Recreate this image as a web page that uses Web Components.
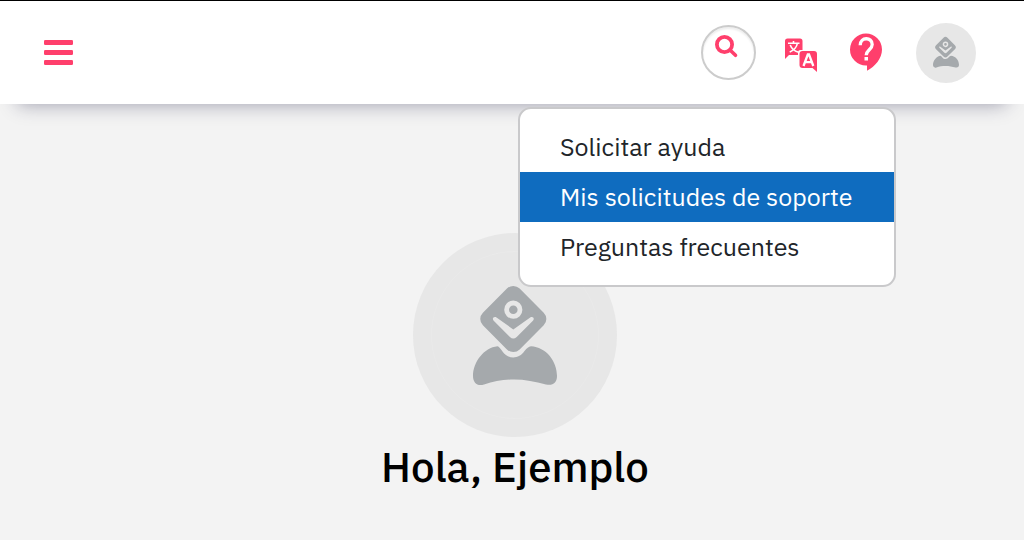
<!DOCTYPE html>
<html lang="es">
<head>
<meta charset="utf-8">
<meta name="viewport" content="width=device-width, initial-scale=1">
<title>Inicio</title>
<style>
  body {
    margin: 0;
    min-height: 100vh;
    background: #f3f3f3;
    color: #212529;
    font-family: "IBM Plex Sans", "Noto Sans", sans-serif;
  }
</style>
</head>
<body>
<app-header>
  <help-menu slot="menu">
    <menu-item>Solicitar ayuda</menu-item>
    <menu-item active>Mis solicitudes de soporte</menu-item>
    <menu-item>Preguntas frecuentes</menu-item>
  </help-menu>
</app-header>
<welcome-panel>Hola, Ejemplo</welcome-panel>

<script>
  class Base extends HTMLElement {
    constructor() {
      super();
      this.attachShadow({ mode: "open" }).innerHTML = this.constructor.markup;
    }
  }

  customElements.define("user-avatar", class extends Base {
    static markup = `
      <style>
        :host { display: flex; align-items: center; justify-content: center; border-radius: 50%;
          background: #e7e7e7; width: var(--avatar-size, 60px); height: var(--avatar-size, 60px);
          position: relative; }
        svg { width: var(--figure-size, 26px); display: block; overflow: visible; }
        .ring { display: var(--ring, none); position: absolute; inset: 18px;
          border: 1px solid #eaeaea; border-radius: 50%; }
      </style>
      <span class="ring"></span>
      <svg viewBox="0 0 84 98" aria-hidden="true">
        <g fill="#a5a9ac">
          <rect x="14.3" y="7" width="52" height="52" rx="9" transform="rotate(45 40.3 33)"/>
          <path d="M24.5 60.2C11 61.5 0 76 0 90c0 7 4.5 10.500 11 8.500C21 95 30 93.500 41 93.500S62 95.500 73 98.500c7 1.500 11-2 11-8.500C84 75 73 61 58 60.200C55.500 60.500 54 62 51.500 65C46 73.500 35 73.500 29.500 65.500C27.500 62.500 26 60.500 24.500 60.200Z"/>
        </g>
        <circle cx="40.300" cy="23.700" r="6.700" fill="none" stroke="#e7e7e7" stroke-width="4.800"/>
        <path d="M23.500 31.400L40.300 43.500L57.200 31.400C60 29.800 62 32.500 59.900 34.800L43.700 51Q40.300 54 36.900 51L20.700 34.800C18.600 32.500 20.700 29.800 23.500 31.400Z" fill="#e7e7e7"/>
      </svg>`;
  });

  customElements.define("app-header", class extends Base {
    static markup = `
      <style>
        :host { display: block; position: relative; z-index: 1; }
        header { display: flex; align-items: center; justify-content: space-between; height: 103px;
          padding: 0 48px 0 44px; border-top: 1px solid #000; background: #fff;
          box-shadow: 0 18px 18px -18px rgba(30, 30, 70, .42); }
        nav, .actions { display: flex; align-items: center; }
        nav { gap: 28px; }
        .actions { gap: 34px; }
        button { display: flex; align-items: center; justify-content: center; border: 0; padding: 0;
          background: none; color: #ff3f6c; cursor: pointer; border-radius: 4px; }
        svg { display: block; }
        .search { box-sizing: border-box; width: 55px; height: 55px; border: 2px solid #ccc;
          border-radius: 50%; align-items: flex-start; padding: 8px 4px 0 0;
          box-shadow: inset 0 2px 2px #eee; }
        .avatar { border-radius: 50%; }
        .menu { position: absolute; top: 107px; right: 128px; }
      </style>
      <header>
        <button type="button" aria-label="Abrir menú">
          <svg width="29" height="25" viewBox="0 0 29 25" fill="currentColor"><rect width="29" height="5" rx="1.300"/><rect y="10" width="29" height="5" rx="1.300"/><rect y="20" width="29" height="5" rx="1.300"/></svg>
        </button>
        <nav aria-label="Acciones">
          <button type="button" class="search" aria-label="Buscar">
            <svg width="24" height="24" viewBox="0.500 0.500 24 24" fill="none" stroke="currentColor"><circle cx="10" cy="10" r="7.600" stroke-width="3.800"/><path d="M15.500 15.500L21 20.800" stroke-width="3.600" stroke-linecap="round"/></svg>
          </button>
          <div class="actions">
            <button type="button" aria-label="Cambiar idioma">
              <svg width="32" height="34" viewBox="-0.500 -2.500 32 34" overflow="visible">
                <path d="M3 0H15.500Q18 0 18 2.500V11.500H16Q13.500 11.500 13.500 14V16.500H4.500L0.500 20.500V2.500Q.5 0 3 0Z" fill="currentColor"/>
                <path d="M18 12.500H29.500Q32.500 12.500 32.500 15.500V33.500L28 29.500H18Q15 29.500 15 26.500V15.500Q15 12.500 18 12.500Z" fill="currentColor"/>
                <path d="M3.500 4.800H15M9 2.500V4.800M5.200 13.600C9.500 11.500 12.300 8.500 12.800 5M5.700 6.500C7 10 10 12.500 14 13.800" fill="none" stroke="#fff" stroke-width="1.600"/>
                <path d="M19 27.500L23.300 16H24.500L28.800 27.500M20.700 23.600H27" fill="none" stroke="#fff" stroke-width="2.300"/>
              </svg>
            </button>
            <button type="button" aria-label="Ayuda" aria-haspopup="menu" aria-expanded="true">
              <svg width="32" height="38" viewBox="0 1 32 38" overflow="visible"><path d="M16 .5a16 16 0 0 0-16 16a16 16 0 0 0 16 16h1v5.300C25 33.500 32 25.500 32 16.500A16 16 0 0 0 16 .5Z" fill="currentColor"/><path d="M10.200 12.200C10.200 3.700 22.200 3.700 22.200 11.500C22.200 16.500 16.200 17 16.200 22.300" fill="none" stroke="#fff" stroke-width="3.300"/><rect x="14.500" y="24" width="3.500" height="3.500" fill="#fff"/></svg>
            </button>
            <button type="button" class="avatar" aria-label="Perfil"><user-avatar></user-avatar></button>
          </div>
        </nav>
      </header>
      <div class="menu"><slot name="menu"></slot></div>`;
  });

  customElements.define("help-menu", class extends Base {
    static markup = `
      <style>
        :host { display: block; box-sizing: border-box; min-width: 378px; padding: 13px 0;
          border: 2px solid #c9c9cb; border-radius: 13px; background: #fff; }
      </style>
      <slot></slot>`;
  });

  customElements.define("menu-item", class extends Base {
    static markup = `
      <style>
        :host { display: block; }
        a { display: block; padding: 0 40px; font-size: 25px; line-height: 50px; color: #212529;
          text-decoration: none; white-space: nowrap; }
        :host([active]) a { background: #0f6cbf; color: #fff; }
      </style>
      <a href="#"><slot></slot></a>`;
  });

  customElements.define("welcome-panel", class extends Base {
    static markup = `
      <style>
        :host { display: block; }
        main { display: flex; flex-direction: column; align-items: center; padding: 129px 0 24px 6px; }
        user-avatar { --avatar-size: 204px; --figure-size: 84px; --ring: block; }
        h1 { margin: 0; font-size: 42px; line-height: 60px; font-weight: 500; color: #000; }
      </style>
      <main>
        <user-avatar></user-avatar>
        <h1><slot></slot></h1>
      </main>`;
  });
</script>
</body>
</html>
